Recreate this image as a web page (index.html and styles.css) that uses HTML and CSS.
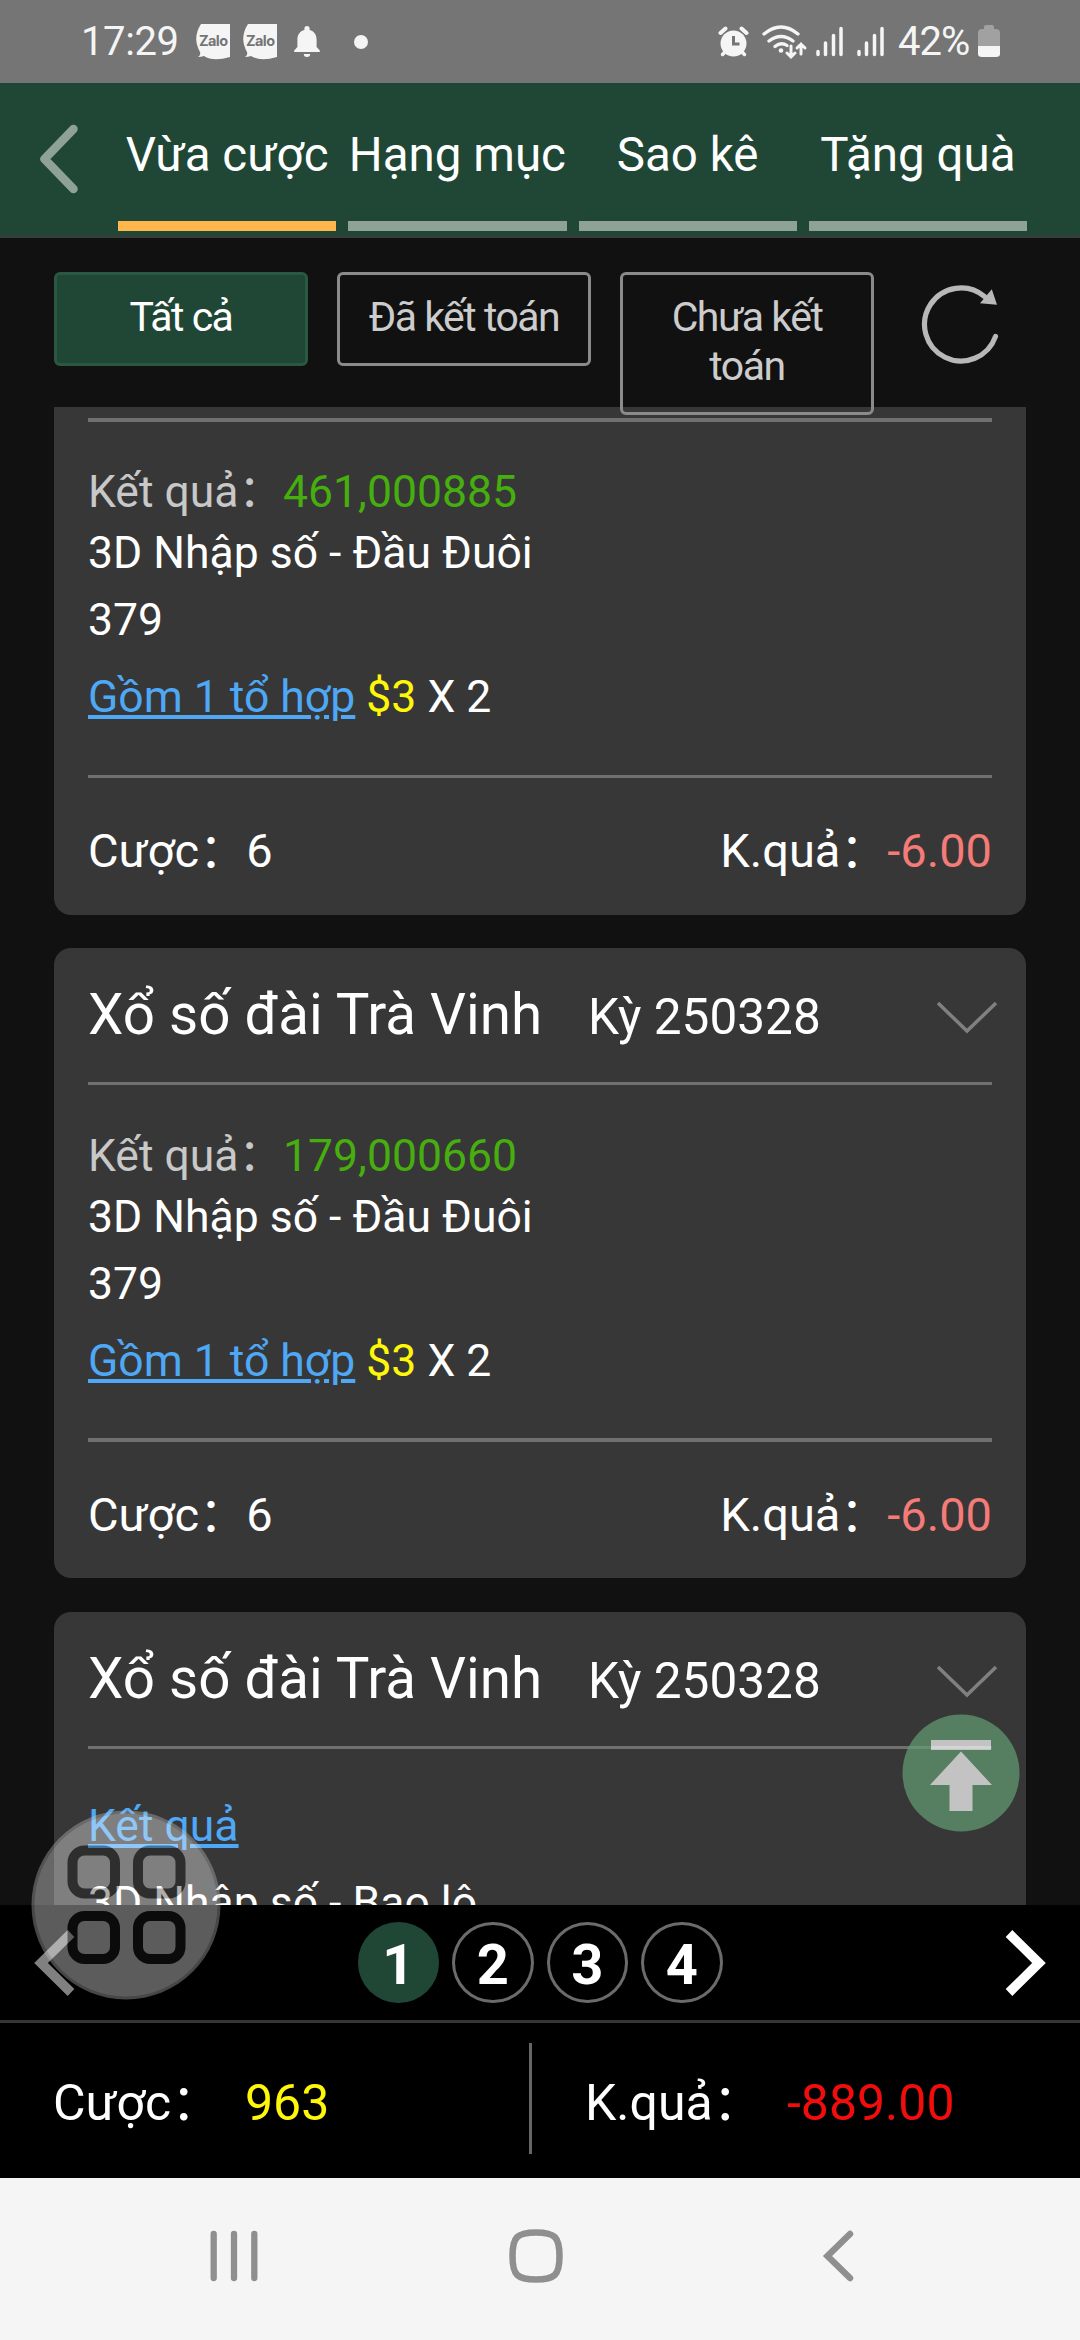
FILE: index.html
```html
<!DOCTYPE html>
<html lang="vi">
<head>
<meta charset="utf-8">
<title>Vừa cược</title>
<link rel="stylesheet" href="styles.css">
</head>
<body>
<div class="screen">
  <div class="status">
    <span class="clock">17:29</span>
    <span class="zalo"><svg width="34" height="36" viewBox="0 0 34 36"><path d="M5 0H34V33Q17 38 8 32Q5 33 2 33Q5 31 4 28Q-4 14 5 0Z" fill="#f5f5f5"/></svg><b>Zalo</b></span>
    <span class="zalo"><svg width="34" height="36" viewBox="0 0 34 36"><path d="M5 0H34V33Q17 38 8 32Q5 33 2 33Q5 31 4 28Q-4 14 5 0Z" fill="#f5f5f5"/></svg><b>Zalo</b></span>
    <svg class="bell" width="26" height="32" viewBox="0 0 26 32"><path d="M13 0a2.600 2.600 0 0 1 2.600 2.600v1.400c4.600 1.200 7 4.700 7 9.500v7.500l3.200 3.500v1.500H.2V24.500L3.400 21v-7.500c0-4.800 2.400-8.300 7-9.500V2.600A2.600 2.600 0 0 1 13 0zM9.800 28h6.400a3.200 3 0 0 1-6.400 0z" fill="#f5f5f5"/></svg>
    <span class="dot"></span>
    <svg class="sysicons" width="126" height="36" viewBox="717 24 126 36" fill="none" stroke="#f5f5f5">
      <circle cx="732.500" cy="43.500" r="13" fill="#f5f5f5" stroke="none"/>
      <path d="M719.500 33l5-4.500M745.500 33l-5-4.500" stroke-width="4" stroke-linecap="round"/>
      <path d="M724 52l-2.500 2.500M741 52l2.500 2.500" stroke-width="3.500" stroke-linecap="round"/>
      <path d="M732.500 36v8h6" stroke="#757575" stroke-width="3"/>
      <path d="M763 34q17-14 34 0M768 41q12-9 24 0M774 46.500q6-5 12-1" stroke-width="3.300" stroke-linecap="round"/>
      <circle cx="780" cy="50.500" r="2.300" fill="#f5f5f5" stroke="none"/>
      <path d="M790 46v10M786 53l4 4 4-4M800 54V44M796 48l4-4 4 4" stroke-width="3" stroke-linecap="round"/>
      <path d="M817 51.500v3M824.500 43v11.500M832.500 35.500v19M840 28.500v26" stroke-width="3.500" stroke-linecap="round"/>
    </svg>
    <svg class="signal" width="28" height="36" viewBox="815 24 28 36" fill="none" stroke="#f5f5f5"><path d="M817 51.500v3M824.500 43v11.500M832.500 35.500v19M840 28.500v26" stroke-width="3.500" stroke-linecap="round"/></svg>
    <span class="pct">42%</span>
    <svg class="battery" width="22" height="33" viewBox="0 0 22 33"><path d="M6 2q0-2 2-2h6q2 0 2 2v2h2q4 0 4 4v13H0V8q0-4 4-4h2z" fill="#a1a1a1"/><path d="M0 21h22v8q0 3-4 3H4q-4 0-4-3z" fill="#f5f5f5"/></svg>
  </div>

  <div class="header">
    <svg class="back" width="40" height="70" viewBox="0 0 40 70"><path d="M34.500 5L5.500 35l29 30" fill="none" stroke="#8fa297" stroke-width="8.500" stroke-linecap="round" stroke-linejoin="round"/></svg>
    <div class="tabs">
      <div class="tab active"><span>Vừa cược</span></div>
      <div class="tab"><span>Hạng mục</span></div>
      <div class="tab"><span>Sao kê</span></div>
      <div class="tab"><span>Tặng quà</span></div>
    </div>
  </div>

  <div class="filters">
    <div class="filter on">Tất cả</div>
    <div class="filter">Đã kết toán</div>
    <div class="filter">Chưa kết toán</div>
    <svg class="refresh" width="82" height="82" viewBox="920 283 82 82"><path d="M984.500 296.500A36.500 36.500 0 1 0 995.500 336.500" fill="none" stroke="#b8b8b8" stroke-width="5.200" stroke-linecap="round"/><path d="M991.800 289.300L997 304.700L980 303.300Z" fill="#b8b8b8"/></svg>
  </div>

  <div class="list">
    <div class="card first">
      <div class="body">
        <p class="result">Kết quả：<em>461,000885</em></p>
        <p class="kind">3D Nhập số - Đầu Đuôi</p>
        <p class="number">379</p>
        <p class="combo"><a>Gồm 1 tổ hợp</a> <i>$3</i> X 2</p>
      </div>
      <div class="foot"><span>Cược：6</span><span>K.quả：<strong>-6.00</strong></span></div>
    </div>
    <div class="card second">
      <div class="head"><span class="title">Xổ số đài Trà Vinh</span><span class="term">Kỳ 250328</span><svg class="chev" width="64" height="36" viewBox="0 0 64 36"><path d="M3 3L32 31L61 3" fill="none" stroke="#808080" stroke-width="3.500"/></svg></div>
      <div class="body">
        <p class="result">Kết quả：<em>179,000660</em></p>
        <p class="kind">3D Nhập số - Đầu Đuôi</p>
        <p class="number">379</p>
        <p class="combo"><a>Gồm 1 tổ hợp</a> <i>$3</i> X 2</p>
      </div>
      <div class="foot"><span>Cược：6</span><span>K.quả：<strong>-6.00</strong></span></div>
    </div>
    <div class="card">
      <div class="head"><span class="title">Xổ số đài Trà Vinh</span><span class="term">Kỳ 250328</span><svg class="chev" width="64" height="36" viewBox="0 0 64 36"><path d="M3 3L32 31L61 3" fill="none" stroke="#808080" stroke-width="3.500"/></svg></div>
      <div class="body pending">
        <p class="result"><a>Kết quả</a></p>
        <p class="kind">3D Nhập số - Bao lô</p>
      </div>
    </div>
  </div>

  <div class="pager">
    <svg width="44" height="70" viewBox="0 0 44 70"><path d="M39 5.500L9 35l30 29.500" fill="none" stroke="#808080" stroke-width="9.500"/></svg>
    <div class="pages"><span class="page current">1</span><span class="page">2</span><span class="page">3</span><span class="page">4</span></div>
    <svg width="44" height="70" viewBox="0 0 44 70"><path d="M5 5.500L35 35L5 64.500" fill="none" stroke="#fff" stroke-width="9.500"/></svg>
  </div>

  <div class="totals">
    <div class="total"><span class="label">Cược：</span><span class="stake">963</span></div>
    <div class="total result-total"><span class="label">K.quả：</span><span class="loss">-889.00</span></div>
  </div>

  <div class="nav">
    <svg width="1080" height="162" viewBox="0 2178 1080 162" fill="none" stroke="#8f8f8f">
      <path d="M213.700 2234v44M234 2234v44M254.300 2234v44" stroke-width="6.300" stroke-linecap="round"/>
      <path d="M512.500 2256C512.500 2237 517 2232.500 536 2232.500S559.500 2237 559.500 2256 555 2279.500 536 2279.500 512.500 2275 512.500 2256Z" stroke-width="6.500"/>
      <path d="M850 2234L827.500 2256l22.500 22" stroke-width="6.500" stroke-linecap="round"/>
    </svg>
  </div>

  <svg class="totop" width="118" height="118" viewBox="0 0 118 118"><circle cx="59" cy="59" r="58.500" fill="#639e72"/><path d="M29 26h60v10H29zM59 37.500l31 33.500H70.500v26H47.500V71H28z" fill="#fff"/></svg>
  <svg class="assist" width="190" height="190" viewBox="0 0 190 190"><circle cx="95" cy="95" r="94.500" fill="#c5c5c5"/><circle cx="95" cy="95" r="91.500" fill="#fff"/><g fill="none" stroke="#1f1f1f" stroke-width="10"><rect x="41.500" y="40.500" width="42.500" height="43" rx="12"/><rect x="107" y="40.500" width="42.500" height="43" rx="12"/><rect x="41.500" y="106" width="42.500" height="43" rx="12"/><rect x="107" y="106" width="42.500" height="43" rx="12"/></g></svg>
</div>
</body>
</html>
```
FILE: styles.css
```css
* { box-sizing: border-box; }
body { margin: 0; background: #111; }
p { margin: 0; }
.screen {
  position: relative;
  width: 1080px;
  height: 2340px;
  overflow: hidden;
  display: flex;
  flex-direction: column;
  background: #111;
  color: #fff;
  font-family: Roboto, "Noto Sans CJK SC", sans-serif;
  font-size: 44.500px;
}
svg { display: block; flex: none; }

/* Status bar */
.status {
  height: 83px;
  flex: none;
  display: flex;
  align-items: center;
  padding-left: 81px;
  background: #757575;
  color: #f5f5f5;
}
.clock { width: 115px; font-size: 40px; letter-spacing: -0.4px; }
.zalo { position: relative; margin-right: 13px; }
.zalo b {
  position: absolute;
  left: 3px;
  top: 7px;
  color: #757575;
  font: 700 14.500px/20px Inter, sans-serif;
  letter-spacing: -0.6px;
}
.bell { margin-left: 4px; }
.dot { width: 14px; height: 14px; margin-left: 34px; border-radius: 50%; background: #f5f5f5; }
.sysicons { margin-left: 350px; }
.signal { margin-left: 13px; }
.pct { width: 76px; margin-left: 13px; font-size: 40px; letter-spacing: -1px; white-space: nowrap; }
.battery { margin-left: 4px; }

/* Header */
.header {
  height: 155px;
  flex: none;
  display: flex;
  padding: 41px 53px 0 39px;
  background: #204735;
  border-bottom: 3px solid #343f3b;
}
.tabs { flex: 1; display: grid; grid-template-columns: repeat(4, 1fr); gap: 12px; margin-left: 39px; height: 107px; }
.tab {
  display: flex;
  justify-content: center;
  border-bottom: 10px solid #8fa297;
  font-size: 47.500px;
  line-height: 62px;
  white-space: nowrap;
}
.tab.active { border-bottom-color: #ffb74d; }

/* Filters */
.filters {
  position: relative;
  z-index: 1;
  height: 169px;
  flex: none;
  display: flex;
  align-items: flex-start;
  gap: 29px;
  padding: 34px 54px 0;
}
.filter {
  width: 254px;
  padding: 18px 20px 21px;
  border: 3px solid #8b8b8b;
  border-radius: 6px;
  color: #ccc;
  font-size: 41px;
  line-height: 49px;
  letter-spacing: -1.500px;
  text-align: center;
}
.filter.on { background: #204735; border-color: #2b5842; color: #fff; }
.refresh { margin: 11px 0 0 17px; }

/* Cards */
.list { flex: none; height: 1498px; padding: 0 54px; overflow: hidden; }
.card { height: 630px; margin-bottom: 34px; padding: 0 34px; background: #373737; border-radius: 17px; }
.card.first { height: 508px; margin-bottom: 33px; padding-top: 11px; border-radius: 0 0 17px 17px; }
.head { display: flex; align-items: baseline; height: 134px; padding-top: 33px; }
.title { width: 500px; font-size: 56.500px; line-height: 68px; white-space: nowrap; }
.term { font-size: 49.500px; }
.chev { align-self: flex-start; margin: 19px -7px 0 auto; }
.body { height: 357px; padding-top: 45px; border-top: 3px solid #707070; white-space: nowrap; }
.first .body { border-top-width: 4px; padding-top: 44px; }
.second .body { height: 356px; }
.result { height: 61px; line-height: 52px; color: #c8c8c8; }
.result em { color: #46ae0e; font-style: normal; }
.kind { height: 67px; line-height: 52px; }
.number { height: 77px; line-height: 52px; }
.combo { line-height: 52px; }
.body.pending { padding-top: 51px; }
.pending .result { height: 77px; }
a { color: #4ea8f5; text-decoration: underline; text-decoration-thickness: 4px; text-underline-offset: 3px; }
.combo i { color: #fff70a; font-style: normal; }
.foot {
  display: flex;
  justify-content: space-between;
  padding-top: 45px;
  border-top: 3px solid #707070;
  font-size: 47px;
  line-height: 56px;
}
.second .foot { border-top-width: 4px; }
.foot strong { color: #f47b78; font-weight: 400; }

/* Pager */
.pager {
  height: 118px;
  flex: none;
  display: flex;
  align-items: center;
  justify-content: space-between;
  padding: 0 32px;
  background: #000;
  border-bottom: 3px solid #353535;
}
.pages { display: flex; gap: 13px; }
.page {
  width: 81.500px;
  height: 81px;
  display: flex;
  align-items: center;
  justify-content: center;
  border: 3px solid #6b6b6b;
  border-radius: 50%;
  font-size: 56px;
  font-weight: 700;
  padding-top: 4px;
}
.page.current { background: #204735; border-color: #204735; }

/* Totals */
.totals {
  height: 155px;
  flex: none;
  display: flex;
  align-items: flex-start;
  padding-top: 20px;
  background: #000;
  font-size: 50px;
  line-height: 60px;
}
.total { display: flex; align-items: center; width: 532px; height: 111px; padding: 9px 0 0 53px; border-right: 3px solid #666; }
.total.result-total { border-right: 0; width: 548px; }
.label { width: 192px; white-space: nowrap; }
.result-total .label { width: 202px; }
.stake { color: #fff70a; }
.loss { color: #f20d0d; }

.nav { height: 162px; flex: none; background: #f5f5f5; }

/* Floating buttons */
.totop { position: absolute; left: 902px; top: 1714px; opacity: 0.7; z-index: 2; }
.assist { position: absolute; left: 31px; top: 1810px; opacity: 0.36; z-index: 3; }
```
